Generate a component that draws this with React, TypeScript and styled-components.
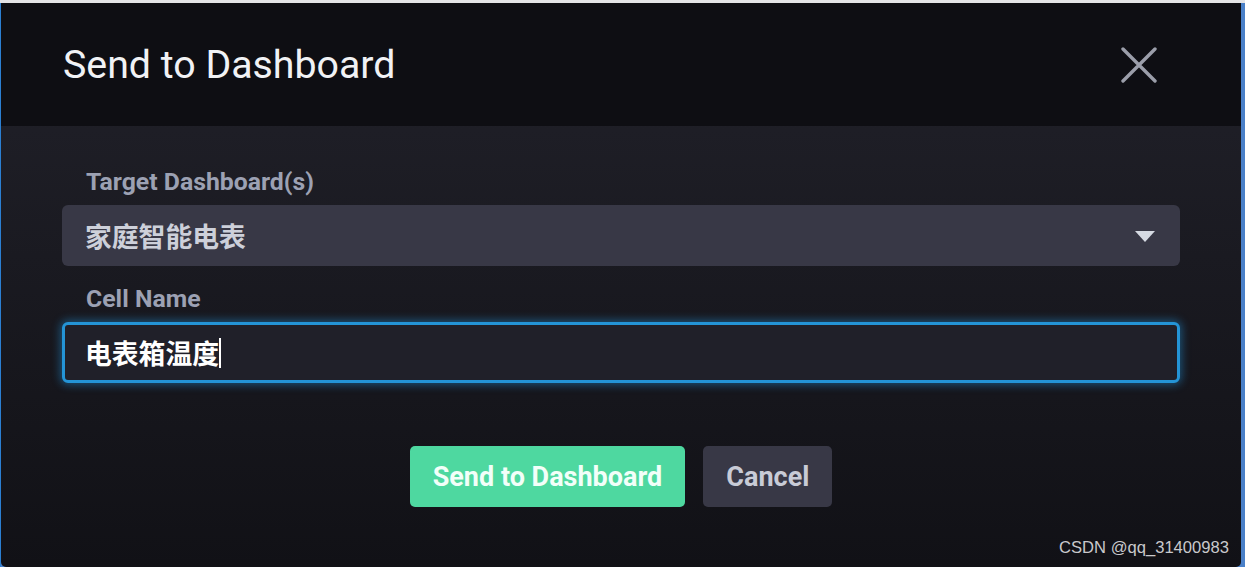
import React from "react";
import styled, { createGlobalStyle } from "styled-components";

const Global = createGlobalStyle`
  html, body { margin: 0; padding: 0; background: #e6e6e6; }
  body { width: 1245px; height: 567px; overflow: hidden; font-family: Roboto, "Noto Sans CJK SC", sans-serif; }
  * { box-sizing: border-box; }
`;

const Frame = styled.div`
  width: 1245px;
  height: 567px;
  border-top: 3px solid #e4e4e6;
  background: linear-gradient(90deg, #2b7fd2 0 1px, transparent 1px), #4a80c8;
  padding: 0 4px 0 1px;
  display: flex;
`;

const Modal = styled.div`
  position: relative;
  flex: 1;
  display: flex;
  flex-direction: column;
  border-radius: 0 0 5px 5px;
  overflow: hidden;
  background: linear-gradient(180deg, #22222b 0%, #1a1a21 45%, #111116 100%);
`;

const Header = styled.div`
  height: 123px;
  flex: none;
  background: #0e0e13;
  display: flex;
  align-items: center;
  justify-content: space-between;
  padding: 0 84px 0 62px;
`;

const Title = styled.h1`
  margin: 0;
  font-family: Roboto, sans-serif;
  font-weight: 400;
  font-size: 39.3px;
  line-height: 48px;
  color: #f1f2f5;
`;

const CloseButton = styled.button`
  width: 36px;
  height: 36px;
  padding: 0;
  border: none;
  background: transparent;
  display: flex;
  align-items: center;
  justify-content: center;
  cursor: pointer;
`;

const Body = styled.div`
  flex: 1;
  display: flex;
  flex-direction: column;
  padding: 40px 61px 0 61px;
`;

const Field = styled.div`
  display: flex;
  flex-direction: column;
  gap: 7px;
  & + & { margin-top: 17px; }
`;

const Label = styled.label`
  padding-left: 24px;
  font-family: Roboto, sans-serif;
  font-weight: 700;
  font-size: 24.8px;
  line-height: 32px;
  color: #9ca1b3;
`;

const Dropdown = styled.div`
  height: 61px;
  border-radius: 6px;
  background: #383846;
  display: flex;
  align-items: center;
  justify-content: space-between;
  padding: 0 25px 0 23px;
`;

const ValueText = styled.span<{ $bright?: boolean }>`
  font-family: "Noto Sans CJK SC", Roboto, sans-serif;
  font-weight: 700;
  font-size: 26.8px;
  line-height: 32px;
  color: ${(p) => (p.$bright ? "#ffffff" : "#cdd0da")};
`;

const Caret = styled.span`
  width: 0;
  height: 0;
  border-left: 10px solid transparent;
  border-right: 10px solid transparent;
  border-top: 11px solid #d6dae3;
  margin-top: 2px;
`;

const InputBox = styled.div`
  height: 61px;
  border-radius: 6px;
  background: #202029;
  border: 3px solid #2494d6;
  box-shadow: 0 0 8px 2px rgba(34, 150, 225, 0.45);
  display: flex;
  align-items: center;
  padding: 0 20px;
`;

const TextCursor = styled.span`
  display: inline-block;
  width: 2px;
  height: 30px;
  background: #ffffff;
`;

const Actions = styled.div`
  display: flex;
  justify-content: center;
  gap: 18px;
  margin-top: 63px;
`;

const Button = styled.button<{ $primary?: boolean }>`
  height: 61px;
  padding: 0 23px;
  border: none;
  border-radius: 5px;
  font-family: Roboto, sans-serif;
  font-weight: 700;
  font-size: 27px;
  background: ${(p) => (p.$primary ? "#4ed8a0" : "#383846")};
  color: ${(p) => (p.$primary ? "#f2fff9" : "#c8cbd6")};
  cursor: pointer;
`;

const Watermark = styled.div`
  position: absolute;
  right: 12px;
  bottom: 9px;
  font-family: "Liberation Sans", Arial, sans-serif;
  font-size: 16.6px;
  line-height: 20px;
  color: #c9c9cc;
`;

export default function App() {
  return (
    <>
      <Global />
      <Frame>
        <Modal>
          <Header>
            <Title>Send to Dashboard</Title>
            <CloseButton aria-label="Close">
              <svg width="36" height="36" viewBox="0 0 36 36">
                <path
                  d="M2 2 L34 34 M34 2 L2 34"
                  stroke="#9b9eaa"
                  strokeWidth="3.4"
                  strokeLinecap="round"
                  fill="none"
                />
              </svg>
            </CloseButton>
          </Header>
          <Body>
            <Field>
              <Label>Target Dashboard(s)</Label>
              <Dropdown>
                <ValueText>家庭智能电表</ValueText>
                <Caret />
              </Dropdown>
            </Field>
            <Field>
              <Label>Cell Name</Label>
              <InputBox>
                <ValueText $bright>电表箱温度</ValueText>
                <TextCursor />
              </InputBox>
            </Field>
            <Actions>
              <Button $primary>Send to Dashboard</Button>
              <Button>Cancel</Button>
            </Actions>
          </Body>
          <Watermark>CSDN @qq_31400983</Watermark>
        </Modal>
      </Frame>
    </>
  );
}
